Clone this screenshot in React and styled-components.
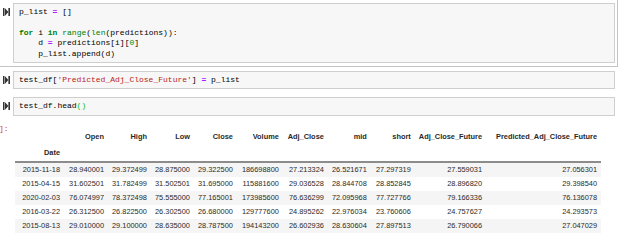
import styled, { createGlobalStyle } from "styled-components";

const GlobalStyle = createGlobalStyle`
  html, body {
    margin: 0;
    padding: 0;
    background: #fff;
  }
  body {
    width: 624px;
    height: 247px;
    overflow: hidden;
  }
`;

const Notebook = styled.div`
  width: 618px;
  margin-top: -1px;
`;

const Cell = styled.div`
  display: flex;
  align-items: flex-start;
  border: 1px solid ${(p) => (p.selected ? "#c4c4c4" : "transparent")};
  border-left: none;
  padding: 3px 2px 3px 0;
`;

const Prompt = styled.div`
  width: 13px;
  flex: 0 0 13px;
  display: flex;
  align-items: center;
  padding-left: 3px;
  box-sizing: border-box;
  height: 18px;
`;

const InputArea = styled.pre`
  flex: 1;
  margin: 0;
  background: #f7f7f7;
  border: 1px solid #cfcfcf;
  padding: 3px 5px;
  font-family: "Liberation Mono", "DejaVu Sans Mono", monospace;
  font-size: 8px;
  line-height: 10.4px;
  color: #000;
  white-space: pre;
`;

const Kw = styled.span`
  color: #008000;
  font-weight: bold;
`;
const Bi = styled.span`
  color: #008000;
`;
const Op = styled.span`
  color: #aa22ff;
  font-weight: bold;
`;
const Num = styled.span`
  color: #008800;
`;
const Str = styled.span`
  color: #ba2121;
`;
const Match = styled.span`
  color: #00bb00;
`;

const OutputRow = styled.div`
  display: flex;
  align-items: flex-start;
  padding-top: 2px;
`;

const OutPrompt = styled.div`
  width: 15px;
  flex: 0 0 15px;
  font-family: "Liberation Mono", monospace;
  font-size: 8px;
  line-height: 10px;
  color: #d84315;
  margin-top: 2px;
  text-indent: -1px;
`;

const Table = styled.table`
  margin-top: 7px;
  border-collapse: collapse;
  table-layout: fixed;
  font-family: "Liberation Sans", Arial, sans-serif;
  font-size: 7.4px;
  color: #2a2a2a;
`;

const Th = styled.th`
  font-weight: bold;
  text-align: right;
  padding: 0 4px;
  height: 16px;
  line-height: 8px;
  white-space: nowrap;
  vertical-align: middle;
`;

const Head = styled.thead`
  border-bottom: 2px solid #8c8c8c;
`;

const Tr = styled.tr`
  background: ${(p) => (p.odd ? "#f5f5f5" : "#fff")};
`;

const Td = styled.td`
  text-align: right;
  padding: 0 4px;
  height: 14px;
  line-height: 8px;
  white-space: nowrap;
`;

const RunIcon = () => (
  <svg width="7" height="8" viewBox="0 0 7 8">
    <rect x="0" y="0" width="1.5" height="8" fill="#333" />
    <polygon points="2,0.3 5.4,4 2,7.7" fill="#333" />
    <rect x="5.4" y="0" width="1.6" height="8" fill="#333" />
  </svg>
);

const columns = [
  { name: "", w: 49 },
  { name: "Open", w: 44 },
  { name: "High", w: 42 },
  { name: "Low", w: 43 },
  { name: "Close", w: 41 },
  { name: "Volume", w: 46 },
  { name: "Adj_Close", w: 45 },
  { name: "mid", w: 42 },
  { name: "short", w: 44 },
  { name: "Adj_Close_Future", w: 66 },
  { name: "Predicted_Adj_Close_Future", w: 115 },
];

const rows = [
  ["2015-11-18", "28.940001", "29.372499", "28.875000", "29.322500", "186698800", "27.213324", "26.521671", "27.297319", "27.559031", "27.056301"],
  ["2015-04-15", "31.602501", "31.782499", "31.502501", "31.695000", "115881600", "29.036528", "28.844708", "28.852845", "28.896820", "29.398540"],
  ["2020-02-03", "76.074997", "78.372498", "75.555000", "77.165001", "173985600", "76.636299", "72.095968", "77.727766", "79.166336", "76.136078"],
  ["2016-03-22", "26.312500", "26.822500", "26.302500", "26.680000", "129777600", "24.895262", "22.976034", "23.760606", "24.757627", "24.293573"],
  ["2015-08-13", "29.010000", "29.100000", "28.635000", "28.787500", "194143200", "26.602936", "28.630604", "27.897513", "26.790066", "27.047029"],
];

export default function App() {
  return (
    <>
      <GlobalStyle />
      <Notebook>
        <Cell selected>
          <Prompt>
            <RunIcon />
          </Prompt>
          <InputArea>
            {"p_list "}<Op>=</Op>{" []\n\n"}
            <Kw>for</Kw>{" i "}<Kw>in</Kw>{" "}<Bi>range</Bi>{"("}<Bi>len</Bi>{"(predictions)):\n"}
            {"    d "}<Op>=</Op>{" predictions[i]["}<Num>0</Num>{"]\n"}
            {"    p_list.append(d)"}
          </InputArea>
        </Cell>
        <Cell>
          <Prompt>
            <RunIcon />
          </Prompt>
          <InputArea>
            {"test_df["}<Str>'Predicted_Adj_Close_Future'</Str>{"] "}<Op>=</Op>{" p_list"}
          </InputArea>
        </Cell>
        <Cell>
          <Prompt>
            <RunIcon />
          </Prompt>
          <InputArea>
            {"test_df.head"}<Match>()</Match>
          </InputArea>
        </Cell>
        <OutputRow>
          <OutPrompt>]:</OutPrompt>
          <Table>
            <colgroup>
              {columns.map((c, i) => (
                <col key={i} style={{ width: c.w }} />
              ))}
            </colgroup>
            <Head>
              <tr>
                {columns.map((c, i) => (
                  <Th key={i}>{c.name}</Th>
                ))}
              </tr>
              <tr>
                <Th>Date</Th>
                {columns.slice(1).map((c, i) => (
                  <Th key={i} />
                ))}
              </tr>
            </Head>
            <tbody>
              {rows.map((r, i) => (
                <Tr key={i} odd={i % 2 === 0}>
                  {r.map((v, j) => (
                    <Td key={j}>{v}</Td>
                  ))}
                </Tr>
              ))}
            </tbody>
          </Table>
        </OutputRow>
      </Notebook>
    </>
  );
}
